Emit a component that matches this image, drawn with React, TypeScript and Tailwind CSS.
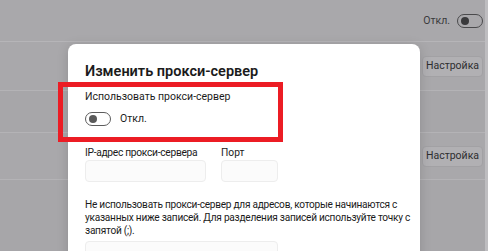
import React from "react";

const font = { fontFamily: 'Roboto, "Liberation Sans", sans-serif' };

const Toggle = ({ dim }: { dim?: boolean }) => (
  <div
    className={`flex items-center w-[26px] h-[14px] rounded-full border px-[3px] ${
      dim ? "border-[#4a4a4c]" : "border-[#5c5c5c]"
    }`}
  >
    <div className={`w-[8px] h-[8px] rounded-full ${dim ? "bg-[#3a3a3c]" : "bg-[#5a5a5a]"}`} />
  </div>
);

const SetupButton = () => (
  <button className="h-[21px] w-[61px] mr-[2px] rounded-[4px] border border-[#a2a1a4] bg-[#b1b0b3] text-[10.5px] text-[#2e2e30]">
    Настройка
  </button>
);

const App = () => {
  return (
    <div className="relative w-[488px] h-[251px] overflow-hidden bg-[#a8a7aa]" style={font}>
      <div className="flex h-full">
        <div className="flex-1 flex flex-col">
          <div className="h-[41px] flex items-center justify-end gap-[7px] pr-[2px] bg-[#a9a8ab]">
            <span className="text-[10.5px] text-[#3a3a3c]">Откл.</span>
            <Toggle dim />
          </div>
          <div className="h-[1px] bg-[#b6b5b8]" />
          <div className="h-[49px] flex items-center justify-end border-b border-[#b4b3b6] bg-[#a9a8ab]">
            <SetupButton />
          </div>
          <div className="h-[42px] border-b border-[#b4b3b6] bg-[#a7a6a9]" />
          <div className="h-[47px] flex items-center justify-end border-b border-[#b4b3b6] bg-[#a9a8ab]">
            <SetupButton />
          </div>
          <div className="flex-1 bg-[#a7a6a9]" />
        </div>
        <div className="w-[3px] bg-[#bebdc0]" />
      </div>

      {/* dialog */}
      <div className="absolute left-[68px] top-[44px] w-[352px] h-[240px] rounded-[8px] bg-white shadow-[0_2px_12px_rgba(0,0,0,0.15)] pl-[17px] pr-[14px] pt-[16px] text-[#1b1b1b]">
        <h2 className="text-[14.5px] leading-[24px] font-semibold">Изменить прокси-сервер</h2>
        <p className="mt-[3px] text-[10.5px] leading-[20px]">Использовать прокси-сервер</p>
        <div className="mt-[5px] flex items-center gap-[9px]">
          <Toggle />
          <span className="text-[10.5px] leading-[14px]">Откл.</span>
        </div>
        <div className="mt-[20px] flex gap-[15px]">
          <div className="flex flex-col w-[121px]">
            <span className="text-[10.25px] leading-[14px] tracking-[-0.3px] whitespace-nowrap">
              IP-адрес прокси-сервера
            </span>
            <div className="w-[121px] h-[22px] rounded-[4px] border border-[#ededed] bg-[#fbfbfb]" />
          </div>
          <div className="flex flex-col">
            <span className="text-[10.25px] leading-[14px]">Порт</span>
            <div className="w-[57px] h-[22px] rounded-[4px] border border-[#ededed] bg-[#fbfbfb]" />
          </div>
        </div>
        <p className="mt-[16px] text-[10.1px] leading-[13px] tracking-[-0.25px] whitespace-nowrap">
          Не использовать прокси-сервер для адресов, которые начинаются с
          <br />
          указанных ниже записей. Для разделения записей используйте точку с
          <br />
          запятой (;).
        </p>
        <div className="mt-[4px] w-[193px] h-[22px] rounded-[4px] border border-[#ededed] bg-[#fbfbfb]" />
      </div>

      {/* annotation */}
      <div className="absolute left-[58px] top-[82px] w-[225px] h-[60px] border-[5px] border-[#ec1c24]" />
    </div>
  );
};

export default App;
